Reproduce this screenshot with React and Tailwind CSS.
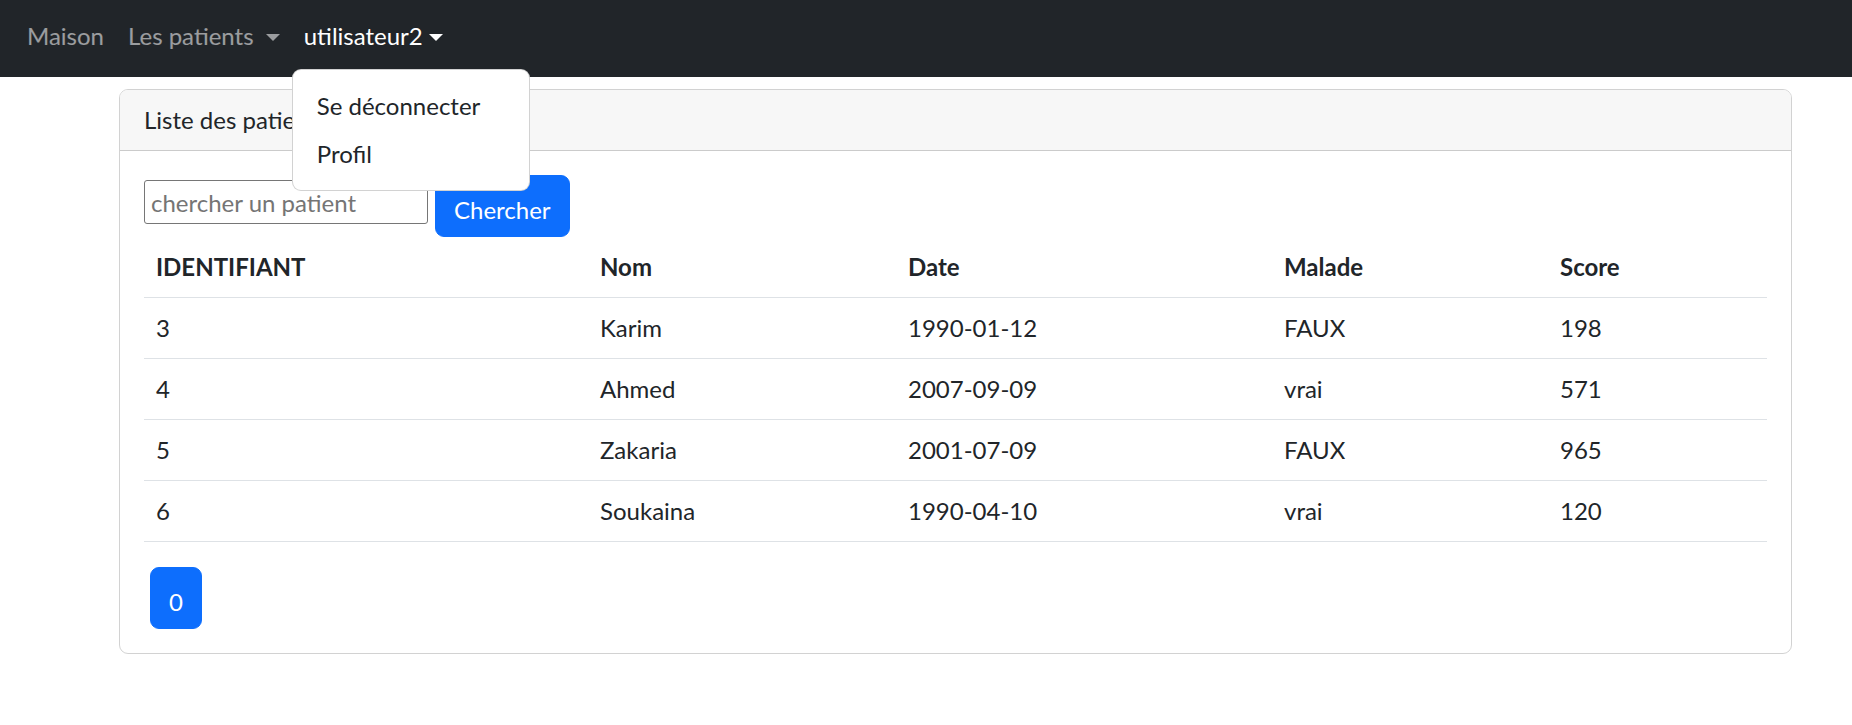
const patients = [
  { id: 3, nom: 'Karim', date: '1990-01-12', malade: 'FAUX', score: 198 },
  { id: 4, nom: 'Ahmed', date: '2007-09-09', malade: 'vrai', score: 571 },
  { id: 5, nom: 'Zakaria', date: '2001-07-09', malade: 'FAUX', score: 965 },
  { id: 6, nom: 'Soukaina', date: '1990-04-10', malade: 'vrai', score: 120 },
];

const Caret = () => (
  <span className="inline-block ml-[6px] align-[4px] w-0 h-0 border-t-[7px] border-t-current border-x-[7px] border-x-transparent" />
);

export default function App() {
  return (
    <div className="min-h-screen bg-white font-['Lato',sans-serif] text-[24px] leading-[36px] text-[#212529]">
      {/* Barre de navigation */}
      <nav className="h-[77px] bg-[#212529] pl-[15px] pt-[18px]">
        <ul className="flex">
          <li>
            <a href="#" className="block px-[12px] text-white/55">Maison</a>
          </li>
          <li>
            <a href="#" className="block px-[12px] text-white/55 whitespace-pre">
              {'Les patients '}
              <Caret />
            </a>
          </li>
          <li className="relative">
            <a href="#" className="block px-[12px] text-white">
              utilisateur2
              <Caret />
            </a>
            <div className="absolute left-0 top-[51px] z-10 w-[238px] bg-white border border-black/[0.175] rounded-[9px] py-[12px]">
              <a href="#" className="block px-[24px] py-[6px] whitespace-nowrap">Se déconnecter</a>
              <a href="#" className="block px-[24px] py-[6px]">Profil</a>
            </div>
          </li>
        </ul>
      </nav>

      {/* Carte */}
      <div className="mt-[12px] ml-[119px] w-[1673px] border border-black/[0.176] rounded-[9px] overflow-hidden">
        <div className="bg-[#f7f7f7] border-b border-black/[0.176] px-[24px] py-[12px]">
          Liste des patients
        </div>
        <div className="p-[24px]">
          <div className="flex items-start">
            <input
              type="text"
              placeholder="chercher un patient"
              className="mt-[5px] w-[284px] h-[44px] border border-[#767676] rounded-[3px] px-[6px] py-[3px] text-[24px] leading-[36px] placeholder:text-[#757575] outline-none"
            />
            <button className="ml-[7px] bg-[#0d6efd] border border-[#0d6efd] text-white rounded-[9px] px-[18px] pt-[16px] pb-[8px] leading-[36px]">
              Chercher
            </button>
          </div>

          <table className="w-full table-fixed border-collapse">
            <colgroup>
              <col className="w-[444px]" />
              <col className="w-[308px]" />
              <col className="w-[376px]" />
              <col className="w-[276px]" />
              <col />
            </colgroup>
            <thead>
              <tr className="border-b border-[#dee2e6]">
                <th className="text-left font-bold px-[12px] py-[12px]">IDENTIFIANT</th>
                <th className="text-left font-bold px-[12px] py-[12px]">Nom</th>
                <th className="text-left font-bold px-[12px] py-[12px]">Date</th>
                <th className="text-left font-bold px-[12px] py-[12px]">Malade</th>
                <th className="text-left font-bold px-[12px] py-[12px]">Score</th>
              </tr>
            </thead>
            <tbody>
              {patients.map((p) => (
                <tr key={p.id} className="border-b border-[#dee2e6]">
                  <td className="px-[12px] py-[12px]">{p.id}</td>
                  <td className="px-[12px] py-[12px]">{p.nom}</td>
                  <td className="px-[12px] py-[12px]">{p.date}</td>
                  <td className="px-[12px] py-[12px]">{p.malade}</td>
                  <td className="px-[12px] py-[12px]">{p.score}</td>
                </tr>
              ))}
            </tbody>
          </table>

          <div className="mt-[25px] ml-[6px]">
            <button className="bg-[#0d6efd] border border-[#0d6efd] text-white rounded-[9px] px-[18px] pt-[16px] pb-[8px] leading-[36px]">
              0
            </button>
          </div>
        </div>
      </div>
    </div>
  );
}
